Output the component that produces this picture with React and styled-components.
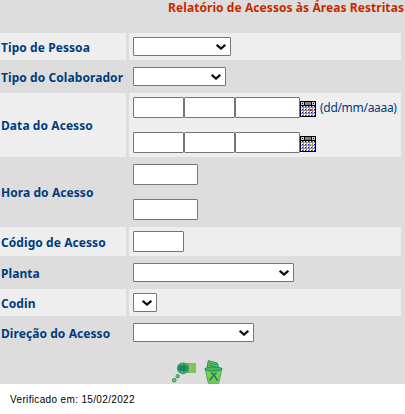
import React from 'react';
import styled, { createGlobalStyle } from 'styled-components';

const GlobalStyle = createGlobalStyle`
  * { box-sizing: border-box; }
  body { margin: 0; background: #fff; overflow: hidden; }
`;

const Page = styled.div`
  width: 405px;
  height: 414px;
  overflow: hidden;
  font-family: "Noto Sans", "Open Sans", sans-serif;
  font-size: 12px;
  color: #003c7d;
`;

const Panel = styled.main`
  height: 384px;
  background: #ddd;
`;

const Title = styled.h1`
  margin: 0;
  height: 33px;
  padding-right: 1px;
  text-align: right;
  white-space: nowrap;
  font-size: 12px;
  font-weight: 700;
  line-height: 16px;
  letter-spacing: ${(p) => p.$spacing}px;
  color: #c52b00;
`;

const Form = styled.form`
  display: grid;
  grid-template-columns: 126px 272px;
  grid-template-rows: 27px 27px 64px 64px 29px 27px 27px 27px;
  gap: 3px;
`;

const Label = styled.label`
  display: flex;
  align-items: center;
  padding: ${(p) => (p.$tall ? 0 : 2)}px 0 0 1px;
  white-space: nowrap;
  font-weight: 700;
  letter-spacing: 0.07px;
  background: ${(p) => (p.$shaded ? '#eee' : 'transparent')};
`;

const Field = styled.div`
  display: flex;
  flex-direction: column;
  gap: 14px;
  padding: 4px;
  background: ${(p) => (p.$shaded ? '#eee' : 'transparent')};
`;

const Line = styled.div`
  display: flex;
  height: 21px;
`;

const TextInput = styled.input`
  width: ${(p) => p.$width}px;
  height: 21px;
  margin: 0;
  padding: 1px 2px;
  border: 1px solid #767676;
  border-radius: 1px;
  background: #fff;
  outline: none;
`;

const SelectBox = styled.span`
  display: grid;
  width: ${(p) => p.$width}px;
  height: 19px;
  > * { grid-area: 1 / 1; }
  svg {
    justify-self: end;
    margin: 7px 5px 0 0;
    pointer-events: none;
  }
`;

const NativeSelect = styled.select`
  appearance: none;
  width: 100%;
  height: 19px;
  margin: 0;
  padding: 0;
  border: 1px solid #767676;
  border-radius: 1px;
  background: #fff;
  outline: none;
`;

const CalendarButton = styled.span`
  width: 16px;
  height: 16px;
  margin-top: 4px;
  svg { display: block; }
`;

const Hint = styled.span`
  margin-left: 4px;
  line-height: 21px;
  white-space: nowrap;
  letter-spacing: ${(p) => p.$spacing}px;
`;

const Actions = styled.div`
  display: flex;
  gap: 8px;
  padding: 14px 0 0 172px;
`;

const Footer = styled.footer`
  padding: 9px 0 0 10px;
  font: 10px/14px "Liberation Sans", Arial, sans-serif;
  letter-spacing: ${(p) => p.$spacing}px;
  color: #000;
`;

function Select({ width }) {
  return (
    <SelectBox $width={width}>
      <NativeSelect><option></option></NativeSelect>
      <svg width="10" height="6" viewBox="0 0 10 6">
        <path d="M.7.8L5 4.6 9.3.8" fill="none" stroke="#111" strokeWidth="2.2" />
      </svg>
    </SelectBox>
  );
}

const dotRows = [5, 8, 11, 14];
const dotColumns = [2, 5, 8, 11, 14];

function Calendar({ mark }) {
  return (
    <CalendarButton>
      <svg width="16" height="16" viewBox="0 0 16 16" shapeRendering="crispEdges">
        <path d="M0 0h16v16H0z" fill="#000" />
        <path d="M1 1h3v3H1zM12 1h3v3h-3z" fill="#ccc" />
        <path d="M2 2h1v1H2zM13 2h1v1h-1z" fill="#000" />
        <path d="M5 1h6v3H5z" fill="#808080" />
        <path d="M1 5h14v10H1z" fill="#fff" />
        <path d="M1 6h14v1H1zM1 9h14v1H1zM1 12h14v1H1zM3 5h1v10H3zM6 5h1v10H6zM9 5h1v10H9zM12 5h1v10h-1z" fill="#909090" />
        {dotRows.map((y) => dotColumns.map((x) => (
          <path key={`${x}-${y}`} d={`M${x} ${y}h1v1h-1z`} fill="#1010d0" />
        )))}
        <path d="M10 8h2v2h-2z" fill={mark} />
        <path d="M10 9h1v1h-1z" fill="#f02010" />
      </svg>
    </CalendarButton>
  );
}

function DateLine({ mark, children }) {
  return (
    <Line>
      <TextInput $width={51} />
      <TextInput $width={51} />
      <TextInput $width={65} />
      <Calendar mark={mark} />
      {children}
    </Line>
  );
}

export default function App() {
  return (
    <Page>
      <GlobalStyle />
      <Panel>
        <Title $spacing={0.07}>Relatório de Acessos às Áreas Restritas</Title>
        <Form>
          <Label $shaded>Tipo de Pessoa</Label>
          <Field $shaded><Select width={98} /></Field>
          <Label>Tipo do Colaborador</Label>
          <Field><Select width={93} /></Field>
          <Label $shaded $tall>Data do Acesso</Label>
          <Field $shaded>
            <DateLine mark="#f02010"><Hint $spacing={-0.3}>(dd/mm/aaaa)</Hint></DateLine>
            <DateLine mark="#e8d020" />
          </Field>
          <Label $tall>Hora do Acesso</Label>
          <Field>
            <TextInput $width={65} />
            <TextInput $width={65} />
          </Field>
          <Label $shaded>Código de Acesso</Label>
          <Field $shaded><TextInput $width={51} /></Field>
          <Label>Planta</Label>
          <Field><Select width={161} /></Field>
          <Label $shaded>Codin</Label>
          <Field $shaded><Select width={24} /></Field>
          <Label>Direção do Acesso</Label>
          <Field><Select width={121} /></Field>
        </Form>
        <Actions>
          <svg width="24" height="24" viewBox="0 0 24 24">
            <path d="M12 3h12v10H12z" fill="#84c45a" />
            <path d="M14 3h3v10h-3z" fill="#62b659" />
            <circle cx="11" cy="8.3" r="6.1" fill="#4aac5b" />
            <path d="M6.5 5.5h9.5v5.5H6.5q-2-2.7 0-5.5z" fill="#208f6b" />
            <path d="M9 5v6M12 4v8" stroke="#137257" />
            <circle cx="5.7" cy="16.2" r="1.7" fill="#6cc052" stroke="#169060" strokeWidth=".8" />
            <circle cx="2.2" cy="20.2" r="1.9" fill="#6cc052" stroke="#169060" strokeWidth=".8" />
          </svg>
          <svg width="20" height="24" viewBox="0 0 20 24">
            <path d="M3 8.5L4.3.7l9 2.3 1.5 5z" fill="#82c95c" stroke="#119568" />
            <path d="M5 3l8 2M4.5 5l8 2" stroke="#098861" />
            <path d="M1 8.5h17l-3.3 14.8H4.3z" fill="#7fc854" stroke="#39a35b" strokeWidth=".8" />
            <ellipse cx="9.5" cy="9" rx="8.6" ry="2" fill="#54b35a" stroke="#149270" />
            <path d="M7 12.5l3 2.5 3.5 5.5M12.5 12.5l-3 2.7-4 5.3" fill="none" stroke="#078267" strokeWidth="1.4" />
          </svg>
        </Actions>
      </Panel>
      <Footer $spacing={0.35}>Verificado em: 15/02/2022</Footer>
    </Page>
  );
}
